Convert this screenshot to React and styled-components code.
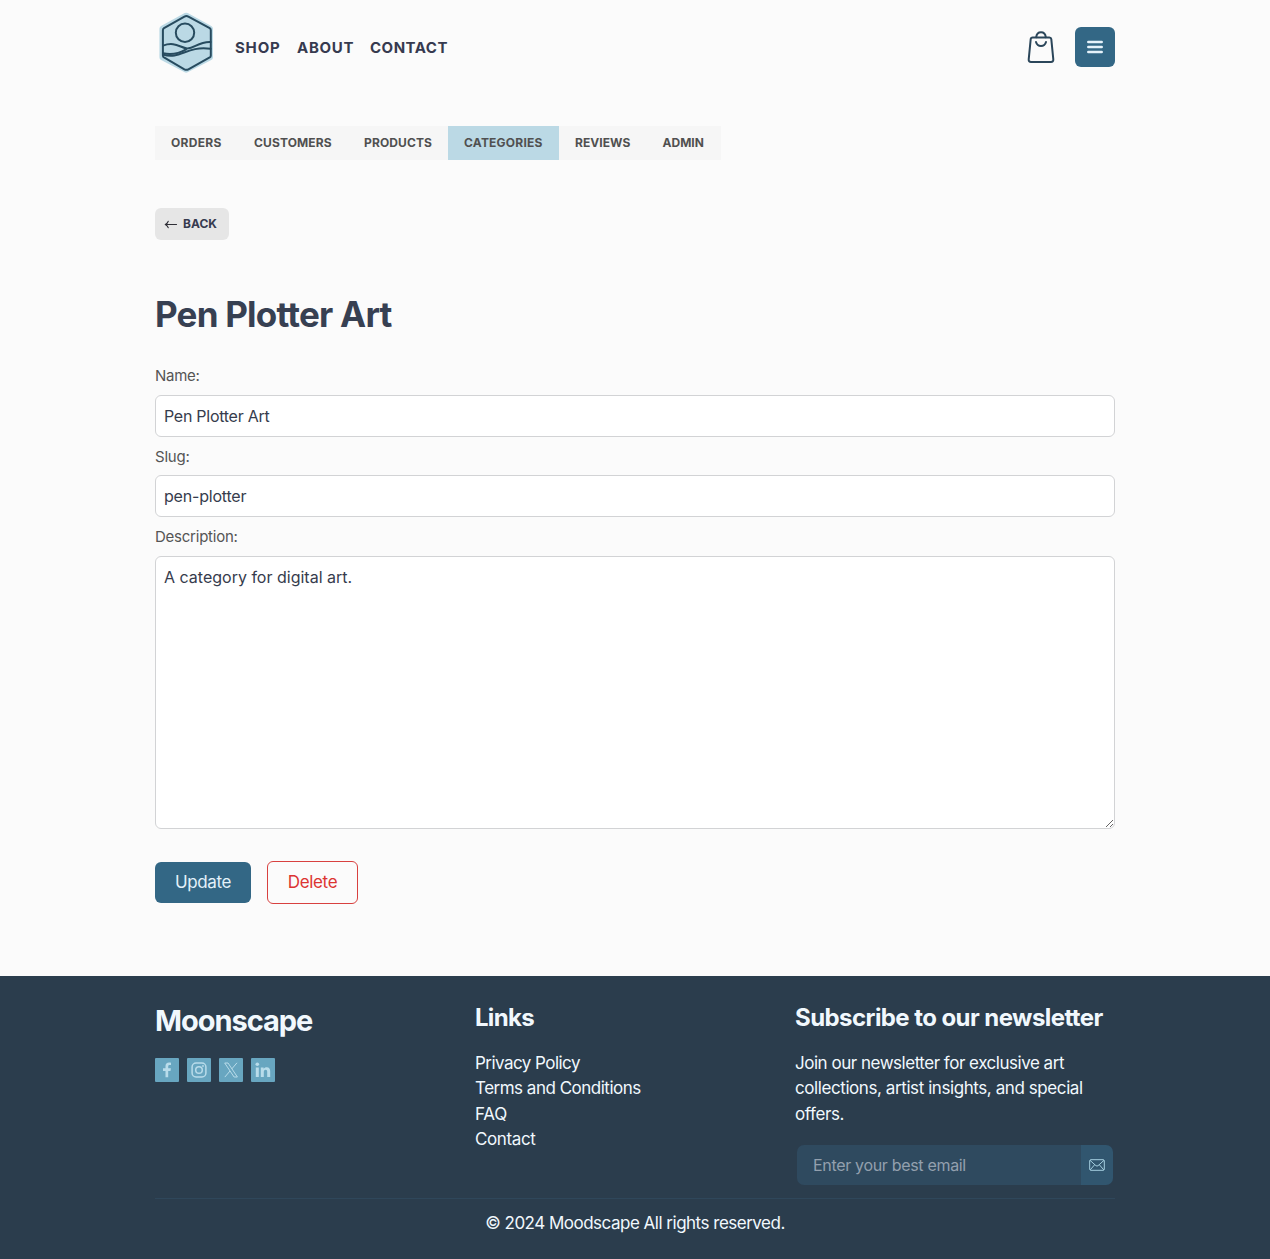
import React from "react";
import styled, { createGlobalStyle } from "styled-components";

const Global = createGlobalStyle`
  *, *::before, *::after { box-sizing: border-box; }
  body {
    margin: 0;
    background: #fbfbfb;
    font-family: Inter, Roboto, "Liberation Sans", sans-serif;
    color: #363c4d;
  }
  h1, h2, h3, p { margin: 0; }
  a { color: inherit; text-decoration: none; }
  button, input, textarea { font-family: inherit; }
`;

const Page = styled.div`
  min-height: 1259px;
  display: flex;
  flex-direction: column;
`;

const Container = styled.div`
  width: 960px;
  margin: 0 auto;
`;

const Header = styled(Container).attrs({ as: "header" })`
  height: 94px;
  display: flex;
  align-items: center;
`;

const Logo = styled.a`
  display: block;
  width: 64px;
  height: 64px;
  margin: -8px 16px 0 0;
`;

const MainNav = styled.nav`
  display: flex;
  gap: 16px;
  flex: 1;
  padding-top: 2px;
`;

const NavLink = styled.a`
  font-size: 15px;
  line-height: 20px;
  font-weight: 650;
  width: ${(p) => p.$width}px;
  letter-spacing: ${(p) => p.$track}px;
  white-space: nowrap;
  color: #363a4f;
`;

const Actions = styled.div`
  display: flex;
  align-items: center;
  gap: 18px;
`;

const BagButton = styled.button`
  display: flex;
  padding: 0;
  border: 0;
  background: none;
`;

const MenuButton = styled.button`
  width: 40px;
  height: 40px;
  border: 0;
  border-radius: 6px;
  padding: 0;
  background: #336785;
  color: #e6f2fa;
  display: flex;
  align-items: center;
  justify-content: center;
`;

const Main = styled(Container).attrs({ as: "main" })`
  padding-top: 32px;
  height: 882px;
`;

const Tabs = styled.nav`
  display: inline-flex;
  height: 34px;
  background: #f6f6f6;
`;

const Tab = styled.a`
  width: ${(p) => p.$width}px;
  padding-left: 16px;
  font-size: 12px;
  line-height: 34px;
  font-weight: 700;
  letter-spacing: ${(p) => p.$track}px;
  white-space: nowrap;
  color: #505050;
  background: ${(p) => (p.$active ? "#bbd9e5" : "transparent")};
`;

const BackButton = styled.button`
  display: flex;
  align-items: center;
  gap: 5px;
  width: 74px;
  height: 32px;
  margin-top: 48px;
  padding: 0 0 1px 9px;
  border: 0;
  border-radius: 6px;
  background: #e6e6e6;
  color: #363a4f;
  font-size: 12px;
  font-weight: 700;
  letter-spacing: 0;
`;

const Title = styled.h1`
  margin-top: 50px;
  font-size: 35px;
  line-height: 48px;
  font-weight: 700;
  letter-spacing: -0.78px;
  font-feature-settings: "calt" 0;
  color: #374052;
`;

const Form = styled.form`
  margin-top: 27px;
  display: flex;
  flex-direction: column;
`;

const Field = styled.label`
  display: flex;
  flex-direction: column;
  height: ${(p) => p.$height}px;
`;

const Label = styled.span`
  font-size: 15px;
  line-height: 22px;
  height: ${(p) => p.$height || 30}px;
  letter-spacing: ${(p) => p.$track}px;
  color: #555;
`;

const Input = styled.input`
  height: 42px;
  border: 1px solid #d2d3d5;
  border-radius: 6px;
  padding: 0 8px;
  background: #fff;
  color: #363c4d;
  font-size: 16px;
  letter-spacing: ${(p) => p.$track}px;
  outline: 0;
`;

const TextArea = styled.textarea`
  height: 273px;
  border: 1px solid #d2d3d5;
  border-radius: 6px;
  padding: 8px;
  background: #fff;
  color: #363c4d;
  font-size: 16px;
  line-height: 24px;
  letter-spacing: 0;
  outline: 0;
  resize: vertical;
`;

const FormActions = styled.div`
  display: flex;
  align-items: center;
  gap: 16px;
  margin-top: 32px;
`;

const Button = styled.button`
  width: ${(p) => (p.$danger ? 91 : 96)}px;
  height: ${(p) => (p.$danger ? 43 : 41)}px;
  padding: 0 0 2px;
  border: ${(p) => (p.$danger ? "1px solid #d8413f" : "0")};
  border-radius: 6px;
  background: ${(p) => (p.$danger ? "transparent" : "#336785")};
  color: ${(p) => (p.$danger ? "#dc3432" : "#e3f1fa")};
  font-size: 17px;
  letter-spacing: -0.35px;
`;

const Footer = styled.footer`
  height: 283px;
  background: #2b3d4d;
  color: #f1f8fd;
`;

const FooterGrid = styled(Container)`
  display: grid;
  grid-template-columns: repeat(3, 320px);
  height: 223px;
  padding-top: 24px;
  border-bottom: 1px solid #2f475b;
`;

const Brand = styled.h2`
  font-size: 29px;
  line-height: 42px;
  font-weight: 750;
  letter-spacing: -1.05px;
`;

const Socials = styled.div`
  display: flex;
  gap: 8px;
  margin-top: 16px;
`;

const SocialLink = styled.a`
  display: flex;
  width: 24px;
  height: 24px;
  border-radius: 1px;
  background: #68a6c0;
  color: #b9dcea;
`;

const ColumnTitle = styled.h3`
  font-size: 24px;
  line-height: 36px;
  font-weight: 700;
  letter-spacing: ${(p) => p.$track}px;
  white-space: nowrap;
`;

const Links = styled.div`
  display: flex;
  flex-direction: column;
  margin-top: 14.6px;
`;

const FooterLink = styled.a`
  font-size: 17px;
  line-height: 25.5px;
  letter-spacing: ${(p) => p.$track}px;
`;

const Blurb = styled.p`
  margin-top: 14.6px;
  font-size: 17px;
  line-height: 25.5px;
  white-space: nowrap;
`;

const Line = styled.span`
  display: block;
  letter-spacing: ${(p) => p.$track}px;
`;

const Newsletter = styled.form`
  display: flex;
  width: 316px;
  height: 40px;
  margin: 17.9px 0 0 2px;
  border-radius: 7px;
  overflow: hidden;
`;

const EmailInput = styled.input`
  width: 284px;
  border: 0;
  border-radius: 0;
  padding: 0 16px;
  background: #2f4a5f;
  color: #f1f8fd;
  font-size: 16px;
  letter-spacing: -0.32px;
  outline: 0;
  &::placeholder { color: #93a0ae; opacity: 1; }
`;

const SendButton = styled.button`
  width: 32px;
  padding: 0;
  border: 0;
  background: #31566f;
  color: #a5cfe0;
  display: flex;
  align-items: center;
  justify-content: center;
`;

const Copyright = styled.p`
  text-align: center;
  font-size: 17px;
  line-height: 26px;
  padding-top: 11px;
  letter-spacing: -0.5px;
`;

const LogoMark = () => (
  <svg width="64" height="64" viewBox="0 0 64 64" fill="none" strokeLinejoin="round" strokeLinecap="round">
    <path d="M31.2 4.9 54.8 17.8V46.2L31.2 58.5 7.6 46.2V17.8Z" fill="#bbd9e5" stroke="#bbd9e5" strokeWidth="6.4" />
    <g stroke="#274b5f" strokeWidth="2">
      <path d="M29.4 5.6Q31.4 4.5 33.4 5.6L54.7 17.2Q55.8 17.9 55.8 19.2V44.4Q55.8 45.7 54.7 46.4L33.4 58.3Q31.4 59.4 29.4 58.3L9 46.4Q7.9 45.7 7.9 44.4V19.2Q7.9 17.9 9 17.2Z" />
      <circle cx="30" cy="21.7" r="9.2" />
      <path d="M8 34.6C19 30.6 24 35.6 31 37.3C38 39 43 30.3 55.5 30.9" />
      <path d="M8 42.3C18 44.5 25 42 31 38.4" />
      <path d="M8 43.6C26 48.8 31 34.6 55.5 37.8" />
    </g>
  </svg>
);

const BagIcon = () => (
  <svg width="32" height="34" viewBox="0 0 32 34" fill="none" stroke="#2b465a" strokeWidth="2" strokeLinecap="round" strokeLinejoin="round">
    <path d="M7.6 7.5H24.4Q26.1 7.5 26.3 9.2L28.3 29.3Q28.5 31.9 26 31.9H6Q3.5 31.9 3.7 29.3L5.7 9.2Q5.9 7.5 7.6 7.5Z" />
    <path d="M11.2 7.2C12 .7 20 .7 20.8 7.2M11 12C12.5 17.3 19.5 17.3 21 12" />
  </svg>
);

const MenuIcon = () => (
  <svg width="18" height="16" viewBox="0 0 18 16" stroke="currentColor" strokeWidth="2.5" strokeLinecap="round">
    <path d="M2.3 3H15.7M2.3 8H15.7M2.3 13H15.7" />
  </svg>
);

const ArrowIcon = () => (
  <svg width="14" height="12" viewBox="0 0 14 12" fill="none" stroke="#2e2e36" strokeWidth="1.2" strokeLinecap="round" strokeLinejoin="round">
    <path d="M12.5 6.5H1.3M4.2 3.4Q3.5 5.5 1.3 6.5Q3.5 7.5 4.2 9.6" />
  </svg>
);

const MailIcon = () => (
  <svg width="16" height="12" viewBox="0 0 16 12" fill="none" stroke="currentColor" strokeWidth="1" strokeLinejoin="round">
    <rect x=".7" y=".7" width="14.6" height="10.6" rx="1.2" />
    <path d="M1 1.3 6.8 6.6Q8 7.5 9.2 6.6L15 1.3M1.2 10.9 5.7 5.7M14.8 10.9 10.3 5.7" />
  </svg>
);

const FacebookIcon = () => (
  <svg width="24" height="24" viewBox="0 0 24 24" fill="currentColor">
    <path d="M10.5 19.3V12.9H8V10.2H10.5V8.1C10.5 5.8 11.8 4.5 14 4.5 14.9 4.5 16 4.7 16 4.7V7H14.7C13.5 7 13.2 7.7 13.2 8.4V10.2H15.9L15.5 12.9H13.2V19.3Z" />
  </svg>
);

const InstagramIcon = () => (
  <svg width="24" height="24" viewBox="0 0 24 24" fill="none" stroke="currentColor" strokeWidth="1.5">
    <rect x="5.1" y="5.1" width="13.8" height="13.8" rx="4" />
    <circle cx="12" cy="12" r="3.3" />
    <circle cx="16" cy="8" r=".9" fill="currentColor" stroke="none" />
  </svg>
);

const XIcon = () => (
  <svg width="24" height="24" viewBox="0 0 24 24" fill="none" stroke="currentColor" strokeWidth="1">
    <path d="M5.7 5H9L18.4 19H15.1ZM18 4.8 12.8 10.9M11 13 5.8 19.1" />
  </svg>
);

const LinkedinIcon = () => (
  <svg width="24" height="24" viewBox="0 0 24 24" fill="currentColor">
    <circle cx="6.3" cy="6.3" r="1.8" />
    <path d="M4.8 9.5H7.8V19H4.8ZM9.8 9.5H12.6V10.8C13.2 9.8 14.3 9.2 15.7 9.2 18.4 9.2 19.2 11 19.2 13.4V19H16.2V14C16.2 12.7 16 11.7 14.6 11.7 13.2 11.7 12.8 12.7 12.8 14V19H9.8Z" />
  </svg>
);

const navItems = [
  ["SHOP", 46, 0.8],
  ["ABOUT", 57, 0.7],
  ["CONTACT", 80, 0.5],
];

const tabs = [
  ["ORDERS", 83, 0.3],
  ["CUSTOMERS", 110, 0.12],
  ["PRODUCTS", 100, 0.12],
  ["CATEGORIES", 111, 0.22],
  ["REVIEWS", 87.5, 0.05],
  ["ADMIN", 74.5, 0],
];

const footerLinks = [
  ["Privacy Policy", -0.54],
  ["Terms and Conditions", -0.5],
  ["FAQ", -0.25],
  ["Contact", -0.38],
];

const blurbLines = [
  ["Join our newsletter for exclusive art", -0.48],
  ["collections, artist insights, and special", -0.42],
  ["offers.", -0.4],
];

const socials = [
  ["Facebook", FacebookIcon],
  ["Instagram", InstagramIcon],
  ["X", XIcon],
  ["LinkedIn", LinkedinIcon],
];

export default function App() {
  return (
    <Page>
      <Global />
      <Header>
        <Logo href="#"><LogoMark /></Logo>
        <MainNav>
          {navItems.map(([name, width, track]) => (
            <NavLink key={name} href="#" $width={width} $track={track}>{name}</NavLink>
          ))}
        </MainNav>
        <Actions>
          <BagButton><BagIcon /></BagButton>
          <MenuButton><MenuIcon /></MenuButton>
        </Actions>
      </Header>
      <Main>
        <Tabs>
          {tabs.map(([name, width, track]) => (
            <Tab key={name} href="#" $width={width} $track={track} $active={name === "CATEGORIES"}>{name}</Tab>
          ))}
        </Tabs>
        <BackButton><ArrowIcon />BACK</BackButton>
        <Title>Pen Plotter Art</Title>
        <Form>
          <Field $height={81}>
            <Label $track={-0.25}>Name:</Label>
            <Input $track={-0.27} defaultValue="Pen Plotter Art" />
          </Field>
          <Field $height={80}>
            <Label $track={-0.2} $height={29}>Slug:</Label>
            <Input $track={-0.2} defaultValue="pen-plotter" />
          </Field>
          <Field $height={303}>
            <Label $track={-0.24}>Description:</Label>
            <TextArea defaultValue="A category for digital art." />
          </Field>
          <FormActions>
            <Button type="button">Update</Button>
            <Button type="button" $danger>Delete</Button>
          </FormActions>
        </Form>
      </Main>
      <Footer>
        <FooterGrid>
          <div>
            <Brand>Moonscape</Brand>
            <Socials>
              {socials.map(([name, Icon]) => (
                <SocialLink key={name} href="#"><Icon /></SocialLink>
              ))}
            </Socials>
          </div>
          <div>
            <ColumnTitle $track={-0.7}>Links</ColumnTitle>
            <Links>
              {footerLinks.map(([name, track]) => (
                <FooterLink key={name} href="#" $track={track}>{name}</FooterLink>
              ))}
            </Links>
          </div>
          <div>
            <ColumnTitle $track={-0.57}>Subscribe to our newsletter</ColumnTitle>
            <Blurb>
              {blurbLines.map(([text, track]) => <Line key={text} $track={track}>{text}</Line>)}
            </Blurb>
            <Newsletter>
              <EmailInput placeholder="Enter your best email" />
              <SendButton type="button"><MailIcon /></SendButton>
            </Newsletter>
          </div>
        </FooterGrid>
        <Copyright>© 2024 Moodscape All rights reserved.</Copyright>
      </Footer>
    </Page>
  );
}
